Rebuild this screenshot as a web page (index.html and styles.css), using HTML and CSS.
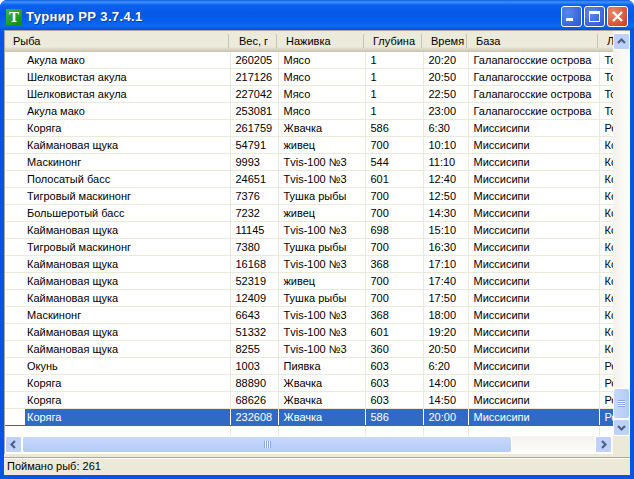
FILE: index.html
```html
<!DOCTYPE html>
<html lang="ru">
<head>
  <meta charset="UTF-8">
  <title>Турнир РР 3.7.4.1</title>
  <link rel="stylesheet" href="styles.css">
</head>
<body>
  <div class="window">
    <div class="titlebar">
      <div class="app-icon">T</div>
      <div class="title">Турнир РР 3.7.4.1</div>
      <div class="caption-buttons">
        <div class="cap-btn">
          <svg width="21" height="21" viewBox="0 0 21 21"><rect x="5" y="12" width="7" height="3" fill="#fff"/></svg>
        </div>
        <div class="cap-btn">
          <svg width="21" height="21" viewBox="0 0 21 21"><path d="M5 5h11v11H5z M6 8v7h9V8z" fill="#fff" fill-rule="evenodd"/></svg>
        </div>
        <div class="cap-btn cap-close">
          <svg width="21" height="21" viewBox="0 0 21 21"><path d="M6 6l9 9M15 6l-9 9" stroke="#fff" stroke-width="2.4" fill="none"/></svg>
        </div>
      </div>
    </div>

    <div class="client">
      <div class="list-area">
        <div class="list-main">
          <div class="list-clip">
            <table class="fish-table">
              <colgroup>
                <col class="c-fish"><col class="c-weight"><col class="c-bait"><col class="c-depth"><col class="c-time"><col class="c-base"><col class="c-last">
              </colgroup>
              <thead>
                <tr><th>Рыба</th><th class="nudge">Вес, г</th><th>Наживка</th><th>Глубина</th><th>Время</th><th>База</th><th>Л</th></tr>
              </thead>
              <tbody>
                <tr><td>Акула мако</td><td>260205</td><td>Мясо</td><td>1</td><td>20:20</td><td>Галапагосские острова</td><td>То</td></tr>
                <tr><td>Шелковистая акула</td><td>217126</td><td>Мясо</td><td>1</td><td>20:50</td><td>Галапагосские острова</td><td>То</td></tr>
                <tr><td>Шелковистая акула</td><td>227042</td><td>Мясо</td><td>1</td><td>22:50</td><td>Галапагосские острова</td><td>То</td></tr>
                <tr><td>Акула мако</td><td>253081</td><td>Мясо</td><td>1</td><td>23:00</td><td>Галапагосские острова</td><td>То</td></tr>
                <tr><td>Коряга</td><td>261759</td><td>Жвачка</td><td>586</td><td>6:30</td><td>Миссисипи</td><td>Ро</td></tr>
                <tr><td>Каймановая щука</td><td>54791</td><td>живец</td><td>700</td><td>10:10</td><td>Миссисипи</td><td>Ко</td></tr>
                <tr><td>Маскинонг</td><td>9993</td><td>Tvis-100 №3</td><td>544</td><td>11:10</td><td>Миссисипи</td><td>Ко</td></tr>
                <tr><td>Полосатый басс</td><td>24651</td><td>Tvis-100 №3</td><td>601</td><td>12:40</td><td>Миссисипи</td><td>Ко</td></tr>
                <tr><td>Тигровый маскинонг</td><td>7376</td><td>Тушка рыбы</td><td>700</td><td>12:50</td><td>Миссисипи</td><td>Ко</td></tr>
                <tr><td>Большеротый басс</td><td>7232</td><td>живец</td><td>700</td><td>14:30</td><td>Миссисипи</td><td>Ко</td></tr>
                <tr><td>Каймановая щука</td><td>11145</td><td>Tvis-100 №3</td><td>698</td><td>15:10</td><td>Миссисипи</td><td>Ко</td></tr>
                <tr><td>Тигровый маскинонг</td><td>7380</td><td>Тушка рыбы</td><td>700</td><td>16:30</td><td>Миссисипи</td><td>Ко</td></tr>
                <tr><td>Каймановая щука</td><td>16168</td><td>Tvis-100 №3</td><td>368</td><td>17:10</td><td>Миссисипи</td><td>Ко</td></tr>
                <tr><td>Каймановая щука</td><td>52319</td><td>живец</td><td>700</td><td>17:40</td><td>Миссисипи</td><td>Ко</td></tr>
                <tr><td>Каймановая щука</td><td>12409</td><td>Тушка рыбы</td><td>700</td><td>17:50</td><td>Миссисипи</td><td>Ко</td></tr>
                <tr><td>Маскинонг</td><td>6643</td><td>Tvis-100 №3</td><td>368</td><td>18:00</td><td>Миссисипи</td><td>Ко</td></tr>
                <tr><td>Каймановая щука</td><td>51332</td><td>Tvis-100 №3</td><td>601</td><td>19:20</td><td>Миссисипи</td><td>Ко</td></tr>
                <tr><td>Каймановая щука</td><td>8255</td><td>Tvis-100 №3</td><td>360</td><td>20:50</td><td>Миссисипи</td><td>Ко</td></tr>
                <tr><td>Окунь</td><td>1003</td><td>Пиявка</td><td>603</td><td>6:20</td><td>Миссисипи</td><td>Ро</td></tr>
                <tr><td>Коряга</td><td>88890</td><td>Жвачка</td><td>603</td><td>14:00</td><td>Миссисипи</td><td>Ро</td></tr>
                <tr><td>Коряга</td><td>68626</td><td>Жвачка</td><td>603</td><td>14:50</td><td>Миссисипи</td><td>Ро</td></tr>
                <tr class="selected"><td>Коряга</td><td>232608</td><td>Жвачка</td><td>586</td><td>20:00</td><td>Миссисипи</td><td>Ро</td></tr>
                <tr class="blank"><td></td><td></td><td></td><td></td><td></td><td></td><td></td></tr>
              </tbody>
            </table>
          </div>
          <div class="hscroll">
            <div class="sb-btn">
              <svg width="17" height="17" viewBox="0 0 17 17"><path d="M10 5L6.5 8.5 10 12" stroke="#4d6185" stroke-width="2.2" fill="none"/></svg>
            </div>
            <div class="h-thumb"><span class="h-grip"></span></div>
            <div class="sb-track"></div>
            <div class="sb-btn">
              <svg width="17" height="17" viewBox="0 0 17 17"><path d="M7 5l3.5 3.5L7 12" stroke="#4d6185" stroke-width="2.2" fill="none"/></svg>
            </div>
          </div>
        </div>
        <div class="vscroll">
          <div class="sb-btn">
            <svg width="17" height="17" viewBox="0 0 17 17"><path d="M5 10l3.5-3.5L12 10" stroke="#4d6185" stroke-width="2.2" fill="none"/></svg>
          </div>
          <div class="sb-track"></div>
          <div class="v-thumb"><span class="v-grip"></span></div>
          <div class="sb-btn">
            <svg width="17" height="17" viewBox="0 0 17 17"><path d="M5 7l3.5 3.5L12 7" stroke="#4d6185" stroke-width="2.2" fill="none"/></svg>
          </div>
          <div class="corner"></div>
        </div>
      </div>
      <div class="statusbar">Поймано рыб: 261</div>
    </div>
  </div>
</body>
</html>
```

FILE: styles.css
```css
html, body {
  margin: 0;
  padding: 0;
}

body {
  width: 634px;
  height: 479px;
  overflow: hidden;
  font-family: "Liberation Sans", Arial, sans-serif;
  font-size: 11px;
  color: #000;
}

.window {
  width: 634px;
  height: 479px;
  display: flex;
  flex-direction: column;
  background-color: #0554e3;
  border-radius: 7px 7px 0 0;
  overflow: hidden;
}

.titlebar {
  height: 30px;
  flex: none;
  box-sizing: border-box;
  display: flex;
  align-items: center;
  padding: 3px 6px 0 6px;
  background: linear-gradient(to bottom, #0a5be0 0, #3f93fb 2px, #0a62ee 5px, #0558e6 14px, #0562ee 22px, #0a6af5 26px, #0350d8 30px);
}

.app-icon {
  width: 16px;
  height: 16px;
  margin-right: 4px;
  background: linear-gradient(135deg, #3cb83c, #0f8a14);
  color: #fff;
  font-family: "Liberation Serif", serif;
  font-weight: bold;
  font-size: 15px;
  line-height: 16px;
  text-align: center;
}

.title {
  flex: 1;
  margin-bottom: 1px;
  color: #fff;
  font-weight: bold;
  font-size: 13px;
  letter-spacing: 0.35px;
  text-shadow: 1px 1px 0 #0b3aa0;
}

.caption-buttons {
  display: flex;
  gap: 2px;
}

.cap-btn {
  width: 21px;
  height: 21px;
  border: 1px solid #fff;
  border-radius: 3px;
  box-sizing: border-box;
  background: radial-gradient(circle at 30% 30%, #5a88ee, #2a55d0);
  overflow: hidden;
}

.cap-btn svg {
  display: block;
  margin: -1px;
}

.cap-close {
  background: radial-gradient(circle at 30% 30%, #e88a6a, #c83c18);
}

.client {
  flex: 1;
  margin: 0 4px 4px;
  min-height: 0;
  display: flex;
  flex-direction: column;
  background-color: #ece9d8;
}

.list-area {
  height: 424px;
  flex: none;
  display: flex;
  background-color: #fff;
  border-top: 1px solid #aca899;
  border-left: 1px solid #aca899;
  box-sizing: border-box;
}

.list-main {
  flex: 1;
  min-width: 0;
  display: flex;
  flex-direction: column;
}

.list-clip {
  flex: 1;
  min-height: 0;
  overflow: hidden;
}

.fish-table {
  table-layout: fixed;
  width: 700px;
  border-collapse: collapse;
}

.c-fish { width: 225px; }
.c-weight { width: 48px; }
.c-bait { width: 87px; }
.c-depth { width: 58px; }
.c-time { width: 45px; }
.c-base { width: 131px; }
.c-last { width: 106px; }

.fish-table th {
  height: 20px;
  padding: 0 0 1px 8px;
  font-weight: normal;
  text-align: left;
  white-space: nowrap;
  overflow: hidden;
  background:
    linear-gradient(#c7c5b2, #c7c5b2) right 1px top 3px / 1px 14px no-repeat,
    linear-gradient(to bottom, #ebeadb 0, #ebeadb 16px, #e2dfcc 17px, #d6d2bd 19px, #cbc7b8 20px);
}

.fish-table th.nudge {
  padding-left: 9px;
}

.fish-table td {
  height: 16px;
  padding: 0 0 0 5px;
  border-right: 1px solid #ebe9d8;
  border-bottom: 1px solid #ebe9d8;
  white-space: nowrap;
  overflow: hidden;
}

.fish-table td:first-child {
  padding-left: 22px;
}

.fish-table .selected td {
  background-color: #316ac5;
  color: #fff;
  border-right-color: #fff;
  border-bottom-color: #316ac5;
}

.fish-table .selected td:first-child {
  background: linear-gradient(to right, #fff 0, #fff 20px, #316ac5 20px);
}

.hscroll {
  height: 18px;
  flex: none;
  box-sizing: border-box;
  display: flex;
  padding-right: 1px;
  border-bottom: 1px solid #fff;
  background-color: #f6f5ef;
}

.vscroll {
  width: 17px;
  flex: none;
  box-sizing: border-box;
  display: flex;
  flex-direction: column;
  padding-top: 2px;
  background-color: #f6f5ef;
}

.sb-track {
  flex: 1;
  background: linear-gradient(to bottom, #f3f1ec, #fdfdfb);
}

.vscroll .sb-track {
  background: linear-gradient(to right, #f3f1ec, #fdfdfb);
}

.sb-btn {
  width: 17px;
  height: 17px;
  flex: none;
  box-sizing: border-box;
  border: 1px solid #fff;
  border-radius: 2px;
  background-color: #bfd1fb;
}

.sb-btn svg {
  display: block;
  margin: -1px;
}

.h-thumb {
  width: 490px;
  flex: none;
  display: flex;
  align-items: center;
  justify-content: center;
  box-sizing: border-box;
  border: 1px solid #fff;
  border-radius: 3px;
  background: linear-gradient(to bottom, #c8d8fb, #b3caf9);
}

.h-grip {
  width: 7px;
  height: 7px;
  background: repeating-linear-gradient(to right, #8ba6e6 0 1px, #eef3ff 1px 2px);
}

.v-thumb {
  height: 31px;
  flex: none;
  display: flex;
  align-items: center;
  justify-content: center;
  box-sizing: border-box;
  border: 1px solid #fff;
  border-radius: 3px;
  background: linear-gradient(to right, #c8d8fb, #b3caf9);
}

.v-grip {
  width: 7px;
  height: 7px;
  background: repeating-linear-gradient(to bottom, #8ba6e6 0 1px, #eef3ff 1px 2px);
}

.corner {
  height: 18px;
  flex: none;
  background-color: #ece9d8;
}

.statusbar {
  height: 18px;
  flex: none;
  box-sizing: border-box;
  margin-top: 3px;
  padding-left: 3px;
  line-height: 16px;
  border-top: 1px solid #aca899;
  box-shadow: inset 0 1px 0 #fff;
}
```
